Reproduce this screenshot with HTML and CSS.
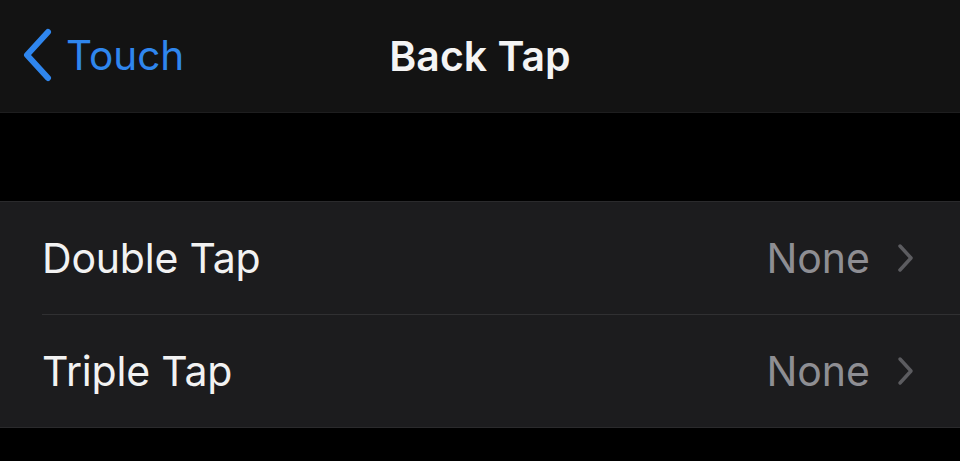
FILE: index.html
```html
<!DOCTYPE html>
<html lang="en">
<head>
  <meta charset="UTF-8" />
  <meta name="viewport" content="width=device-width, initial-scale=1.0"/>
  <title>Back Tap</title>
  <link rel="stylesheet" href="styles.css">
</head>
<body>
  <header class="navbar">
    <div class="nav-left">
      <a class="back-link" href="#">
        <svg class="back-chevron" viewBox="0 0 32 54" width="32" height="54">
          <path d="M27 4 L6 27 L27 50" fill="none" stroke="currentColor" stroke-width="6" stroke-linecap="round" stroke-linejoin="round"/>
        </svg>
        <span>Touch</span>
      </a>
    </div>
    <h1 class="nav-title">Back Tap</h1>
    <div class="nav-right"></div>
  </header>

  <div class="spacer"></div>

  <ul class="group">
    <li class="row">
      <span class="row-label">Double Tap</span>
      <span class="row-value">None</span>
      <svg class="row-chevron" viewBox="0 0 18 30" width="18" height="30">
        <path d="M4 3 L15 15 L4 27" fill="none" stroke="currentColor" stroke-width="3.5" stroke-linecap="round" stroke-linejoin="round"/>
      </svg>
    </li>
    <li class="row">
      <span class="row-label">Triple Tap</span>
      <span class="row-value">None</span>
      <svg class="row-chevron" viewBox="0 0 18 30" width="18" height="30">
        <path d="M4 3 L15 15 L4 27" fill="none" stroke="currentColor" stroke-width="3.5" stroke-linecap="round" stroke-linejoin="round"/>
      </svg>
    </li>
  </ul>
</body>
</html>
```

FILE: styles.css
```css
body {
  margin: 0;
  background: #000;
  color: #fff;
  font-family: Inter, 'Noto Sans', sans-serif;
}
.navbar {
  height: 112px;
  background: #131313;
  border-bottom: 1px solid #1e1e1f;
  display: grid;
  grid-template-columns: 1fr auto 1fr;
  align-items: center;
}
.nav-left {
  padding-left: 21px;
}
.back-link {
  display: inline-flex;
  align-items: center;
  gap: 13px;
  color: #2f86ee;
  text-decoration: none;
  font-size: 40.5px;
  margin-top: 2px;
}
.back-chevron {
  display: block;
}
.nav-title {
  margin: 0;
  font-size: 41px;
  font-weight: 600;
  color: #f4f4f4;
}
.spacer {
  height: 88px;
}
.group {
  list-style: none;
  margin: 0;
  padding: 0 0 0 42px;
  background: #1c1c1e;
  border-top: 1px solid #2a2a2c;
  border-bottom: 1px solid #2a2a2c;
}
.row {
  height: 112px;
  display: flex;
  align-items: center;
  padding-right: 46px;
  font-size: 41px;
}
.row-label {
  letter-spacing: -0.2px;
}
.row + .row {
  border-top: 1px solid #303032;
}
.row-label {
  flex: 1;
  color: #f2f2f2;
}
.row-value {
  color: #8e8e93;
  margin-right: 26px;
}
.row-chevron {
  color: #5c5c60;
}
```
